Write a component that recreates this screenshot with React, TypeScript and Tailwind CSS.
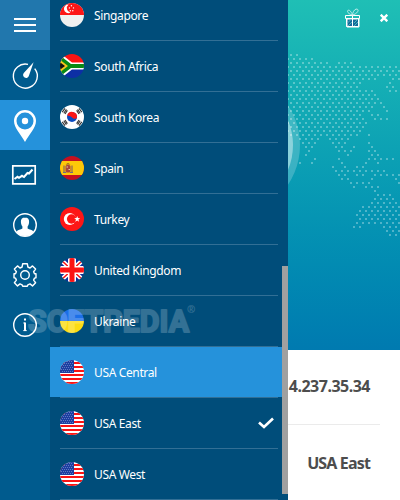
import { ReactNode } from 'react';
import clsx from 'clsx';

interface Server {
  name: string;
  flag: ReactNode;
  highlighted?: boolean;
  connected?: boolean;
}

const USA = (
  <>
    <rect width="24" height="24" fill="#fff" />
    {[2, 6, 10, 14, 18, 22].map((y) => (
      <rect key={y} y={y} width="24" height="2" fill="#fb1414" />
    ))}
    <rect width="14" height="13" fill="#1d3fa0" />
    {[1, 3, 5, 7, 9, 11].map((y) => (
      <path key={y} d={`M${y % 4 === 1 ? 1 : 2} ${y + 0.5}h12`} stroke="#7088cc" strokeDasharray="1 1" strokeWidth="0.8" />
    ))}
  </>
);

const SINGAPORE = (
  <>
    <rect width="24" height="24" fill="#f0f0f0" />
    <rect width="24" height="12" fill="#fd1616" />
    <path d="M8.6 1.6a4.3 4.3 0 1 0 1.8 8A4.6 4.6 0 0 1 8.6 1.6z" fill="#fff" />
    <g fill="#fff">
      <circle cx="11.4" cy="2.8" r=".7" />
      <circle cx="9.4" cy="4.9" r=".7" />
      <circle cx="13.5" cy="4.9" r=".7" />
      <circle cx="10.3" cy="7.7" r=".7" />
      <circle cx="12.8" cy="7.7" r=".7" />
    </g>
  </>
);

const SOUTH_AFRICA = (
  <>
    <rect width="24" height="12" fill="#fb1414" />
    <rect y="12" width="24" height="12" fill="#0d2fa5" />
    <path d="M0-1 12 8.5h12v7H12L0 25z" fill="#fff" />
    <path d="M0 1.5 11 10h13v4H11L0 22.5z" fill="#078a14" />
    <path d="M0 5.8 8 12 0 18.2z" fill="#f6c51d" />
    <path d="M0 8.2 5 12 0 15.8z" fill="#111" />
  </>
);

const SOUTH_KOREA = (
  <>
    <rect width="24" height="24" fill="#fff" />
    <circle cx="12" cy="12" r="5" fill="#0a4bc0" />
    <path d="M7.2 10.6a5 5 0 0 1 9.8 1.8c-1.2 2.2-3.6 1.6-5 0s-3.8-1.4-4.8-1.8z" fill="#fb1616" />
    <g stroke="#333" strokeWidth="1.1">
      <path d="M2.2 7.2 5 3.4M3.8 8.2 6.4 4.4M5 9 7.4 5.4" />
      <path d="M19 3.4l2.8 3.8M17.6 4.4l2.6 3.8M16.6 5.4 19 9" />
      <path d="M2.2 16.8 5 20.6M3.8 15.8l2.6 3.8M5 15l2.4 3.6" />
      <path d="M19 20.6l2.8-3.8M17.6 19.6l2.6-3.8M16.6 18.6 19 15" />
    </g>
  </>
);

const SPAIN = (
  <>
    <rect width="24" height="24" fill="#c5101f" />
    <rect y="5" width="24" height="14" fill="#fdc909" />
    <rect x="5.5" y="9" width="5" height="7.5" rx="1.5" fill="#a9453c" />
    <path d="M5.5 8.5 8 7l2.5 1.5z" fill="#8b5a2b" />
    <path d="M4 9.5v7M12 9.5v7" stroke="#9a7350" strokeWidth="1.4" />
    <path d="M3 16.5h3M10 16.5h3" stroke="#6b6b87" />
    <path d="M6.5 11h1.5M8.5 13.5H10" stroke="#e5c9a0" />
  </>
);

const TURKEY = (
  <>
    <rect width="24" height="24" fill="#fd1616" />
    <circle cx="9.8" cy="12" r="6" fill="#fff" />
    <circle cx="11.6" cy="12" r="4.7" fill="#fd1616" />
    <path d="m17.2 9 .8 2.1 2.2.1-1.8 1.3.7 2.2-1.9-1.3-1.9 1.3.7-2.2-1.8-1.3 2.2-.1z" fill="#fff" />
  </>
);

const UNITED_KINGDOM = (
  <>
    <rect width="24" height="24" fill="#0b2f9c" />
    <path d="M0 1l24 22M24 1 0 23" stroke="#fff" strokeWidth="4.6" />
    <path d="M0 1l24 22M24 1 0 23" stroke="#fb1414" strokeWidth="1.5" />
    <path d="M12 0v24M0 12h24" stroke="#fff" strokeWidth="8" />
    <path d="M12 0v24M0 12h24" stroke="#fb1414" strokeWidth="5" />
  </>
);

const UKRAINE = (
  <>
    <rect width="24" height="12" fill="#1c6fe8" />
    <rect y="12" width="24" height="12" fill="#fddc12" />
  </>
);

const SERVERS: Server[] = [
  { name: 'Singapore', flag: SINGAPORE },
  { name: 'South Africa', flag: SOUTH_AFRICA },
  { name: 'South Korea', flag: SOUTH_KOREA },
  { name: 'Spain', flag: SPAIN },
  { name: 'Turkey', flag: TURKEY },
  { name: 'United Kingdom', flag: UNITED_KINGDOM },
  { name: 'Ukraine', flag: UKRAINE },
  { name: 'USA Central', flag: USA, highlighted: true },
  { name: 'USA East', flag: USA, connected: true },
  { name: 'USA West', flag: USA },
];

// Dotted world map: for every row, [first, last] column runs, two columns apart
const MAP_ROWS: number[][][] = [
  [[1, 3]],
  [[0, 8]],
  [[1, 13], [17, 21]],
  [[0, 36]],
  [[1, 37]],
  [[0, 32], [34, 36]],
  [[1, 29], [35, 37]],
  [[0, 24], [34, 34]],
  [[1, 23], [33, 35]],
  [[0, 28], [34, 36]],
  [[1, 29]],
  [[0, 30]],
  [[1, 31]],
  [[0, 28], [32, 32]],
  [[1, 27], [33, 33]],
  [[0, 24], [28, 30]],
  [[1, 25], [29, 33]],
  [[0, 26]],
  [[1, 25]],
  [[0, 24]],
  [[1, 23], [27, 27]],
  [[4, 10], [14, 20]],
  [[5, 9], [15, 19], [27, 27]],
  [[6, 8], [16, 18], [22, 22], [28, 28]],
  [[7, 7], [17, 21], [27, 29]],
  [[6, 6], [20, 20], [28, 30]],
  [[9, 9], [17, 17], [27, 35]],
  [[4, 4], [8, 8], [18, 18], [26, 26], [30, 30]],
  [[15, 15], [19, 19], [23, 25]],
  [[16, 32]],
  [[17, 19], [23, 25], [29, 37]],
  [[18, 20], [28, 28], [36, 36]],
  [[21, 27], [37, 37]],
  [[22, 22], [26, 30]],
  [[29, 29]],
  [[30, 34]],
  [[29, 35]],
  [[28, 36]],
  [[25, 37]],
  [[24, 36]],
  [[23, 37]],
  [[24, 36]],
  [[23, 37]],
  [[22, 24], [32, 36]],
  [[33, 37]],
  [[34, 36]],
];

function WorldMap() {
  return (
    <svg className="absolute inset-0" width="112" height="350">
      <circle cx="-60" cy="145" r="72" fill="#fff" fillOpacity="0.2" />
      <circle cx="-60" cy="145" r="65" fill="#fff" fillOpacity="0.4" />
      {MAP_ROWS.map((runs, row) =>
        runs.map(([from, to]) =>
          Array.from({ length: (to - from) / 2 + 1 }, (_, i) => (
            <rect key={`${row}-${from}-${i}`} x={3 * (from + 2 * i) - 1} y={54 + row * 4} width="2" height="2" fill="#fff" fillOpacity="0.3" />
          ))
        )
      )}
    </svg>
  );
}

interface NavItemProps {
  className?: string;
  children: ReactNode;
}

function NavItem({ className, children }: NavItemProps) {
  return (
    <button className={clsx('flex h-[50px] w-[50px] shrink-0 items-center justify-center', className)}>
      <svg width="50" height="50" fill="none" stroke="#fff" strokeWidth="1.4">
        {children}
      </svg>
    </button>
  );
}

function Sidebar() {
  return (
    <nav className="flex w-[50px] shrink-0 flex-col bg-[#005b8e]">
      <NavItem className="bg-[#2177ad]">
        <path d="M14 19h22M14 25h22M14 31h22" strokeWidth="2" />
      </NavItem>
      <NavItem>
        <path d="M28 14.4A12 12 0 1 0 34.7 18.6" />
        <path d="M33.6 12.2 24 22.8a3 3 0 1 0 5 2.8z" fill="#fff" stroke="none" />
      </NavItem>
      <NavItem className="bg-[#2592db]">
        <path
          fillRule="evenodd"
          d="M25 10a11 11 0 0 0-11 11c0 6.5 6.5 13 11 21 4.5-8 11-14.5 11-21a11 11 0 0 0-11-11zm0 2.5a8.5 8.5 0 1 1 0 17 8.5 8.5 0 0 1 0-17z"
          fill="#fff"
          stroke="none"
        />
        <circle cx="25" cy="21" r="3.2" fill="#fff" stroke="none" />
      </NavItem>
      <NavItem>
        <path d="M12.8 15.8h22.4v18H12.8z" strokeWidth="1.7" />
        <path d="m14.5 29 3-2.2 1.5 1 3-2 2 1.2 3.5-4 1.5.5 3.5-4" strokeWidth="2" />
      </NavItem>
      <NavItem>
        <circle cx="25" cy="25" r="11.3" />
        <path
          d="M25 17.5c-3 0-4.3 2-4.1 4.5.1 2.5.8 3.5 1.5 4.4v2.2c-1.5 1-5 1.3-6 3.4a11.2 11.2 0 0 0 17.2 0c-1-2.1-4.5-2.4-6-3.4v-2.2c.7-.9 1.4-1.9 1.5-4.4.2-2.5-1.1-4.5-4.1-4.5z"
          fill="#fff"
          stroke="none"
        />
      </NavItem>
      <NavItem>
        <path d="M22.7 13.7h4.6l.6 3.3 2.1 1 2.5-2.1 3.1 3.2-2 2.6.9 2.1h1.5v4l-1.5.3-.9 2 2 2.6-3.1 3.2-2.5-2-2.1.9-.6 1.5h-4.6l-.6-1.5-2.1-.9-2.5 2-3.1-3.2 2-2.6-.9-2-1.5-.3v-4h1.5l.9-2.1-2-2.6 3.1-3.2 2.5 2.1 2.1-1z" strokeLinejoin="round" />
        <circle cx="25" cy="25" r="4.3" />
      </NavItem>
      <NavItem>
        <circle cx="25" cy="25" r="11.3" />
        <path d="M25 18.5v2M25 22.5V31" strokeWidth="2" />
        <path d="M23.3 23H25M23.3 30.6h3.4" strokeWidth="1" />
      </NavItem>
    </nav>
  );
}

function ServerRow({ name, flag, highlighted, connected }: Server) {
  return (
    <li className={clsx('flex h-[51px] shrink-0 flex-col pl-2.5', highlighted && 'bg-linear-to-b from-[#2592db] from-[50px] to-[#004d7a] to-[50px]')}>
      <div className="flex h-[50px] items-center">
        <svg className="rounded-full" width="24" height="24" viewBox="0 0 24 24">
          {flag}
        </svg>
        <span className="ml-2.5 grow pt-0.5 text-[12px] leading-4 tracking-[-0.36px] text-white">{name}</span>
        {connected && (
          <svg className="mr-2" width="16" height="12" fill="none" stroke="#fff" strokeWidth="2.6">
            <path d="m1 5.5 5 4.5 9-8.5" />
          </svg>
        )}
      </div>
      <div className="h-px w-[218px] bg-[#326f95]" />
    </li>
  );
}

function ServerList() {
  return (
    <div className="flex h-[500px] w-[238px] shrink-0 overflow-hidden bg-[#004d7a]">
      <ul className="-mt-2.5 flex w-[232px] flex-col">
        {SERVERS.map((server) => (
          <ServerRow key={server.name} {...server} />
        ))}
      </ul>
      <div className="mt-[266px] h-[228px] w-1.5 bg-[#a0a0a0]" />
    </div>
  );
}

function StatusPanel() {
  return (
    <main className="flex w-[112px] flex-col bg-white">
      <div className="relative h-[350px] bg-linear-to-b from-[#1fbfb5] to-[#007ab0]">
        <WorldMap />
        <div className="relative flex items-center pt-2 pl-[57px]">
          <svg width="16" height="20" fill="none" stroke="#fff">
            <path d="M2 11h12v8H2z" fill="#16699a" />
            <path d="M.5 7.5h14v3H.5zM1.5 10.5v8h12v-8M7.5 7.5v11" />
            <path d="m2.5 15 4-4M3 18l4-4M9 15l4-4M9 18l4-4" stroke="#49b6bb" />
            <path d="M7.5 7C5 6.5 2.5 5 2.5 3.3c0-1.5 2-1.5 3 0S7.5 6 7.5 7c0-2 1.5-5.3 3.5-5.9 1.6-.4 2.7.9 1.7 2.5C11.5 5.5 9.5 6.5 7.5 7z" stroke="#b9ecea" />
          </svg>
          <svg className="ml-[19px]" width="8" height="8" stroke="#fff" strokeWidth="2.4">
            <path d="m.7.7 6.600 6.600M7.300.7.7 7.300" />
          </svg>
        </div>
      </div>
      <div className="mr-5 flex h-[75px] items-center justify-end border-b border-[#ebebeb] pr-2.5">
        <span className="pb-0.5 text-[16px] leading-5 font-bold tracking-[-0.5px] text-[#4d4d4d]">4.237.35.34</span>
      </div>
      <div className="mr-5 flex h-[75px] items-center justify-end pr-2.5">
        <span className="text-[16px] leading-5 font-bold tracking-[-0.85px] text-[#4d4d4d]">USA East</span>
      </div>
    </main>
  );
}

function Watermark() {
  return (
    <svg className="pointer-events-none absolute top-[300px] left-[24px] opacity-20" width="180" height="40" fill="#fff">
      <text
        x="4"
        y="32"
        textLength="161"
        lengthAdjust="spacingAndGlyphs"
        stroke="#fff"
        strokeWidth="2"
        strokeLinejoin="round"
        className="font-['Roboto',sans-serif] text-[31px] font-bold"
      >
        SOFTPEDIA
      </text>
      <text x="163" y="13" className="font-['Open_Sans',sans-serif] text-[10px] font-bold">
        ®
      </text>
    </svg>
  );
}

export default function App() {
  return (
    <div className="relative flex h-[500px] w-[400px] overflow-hidden font-['Noto_Sans','Open_Sans',sans-serif]">
      <Sidebar />
      <ServerList />
      <StatusPanel />
      <Watermark />
    </div>
  );
}
